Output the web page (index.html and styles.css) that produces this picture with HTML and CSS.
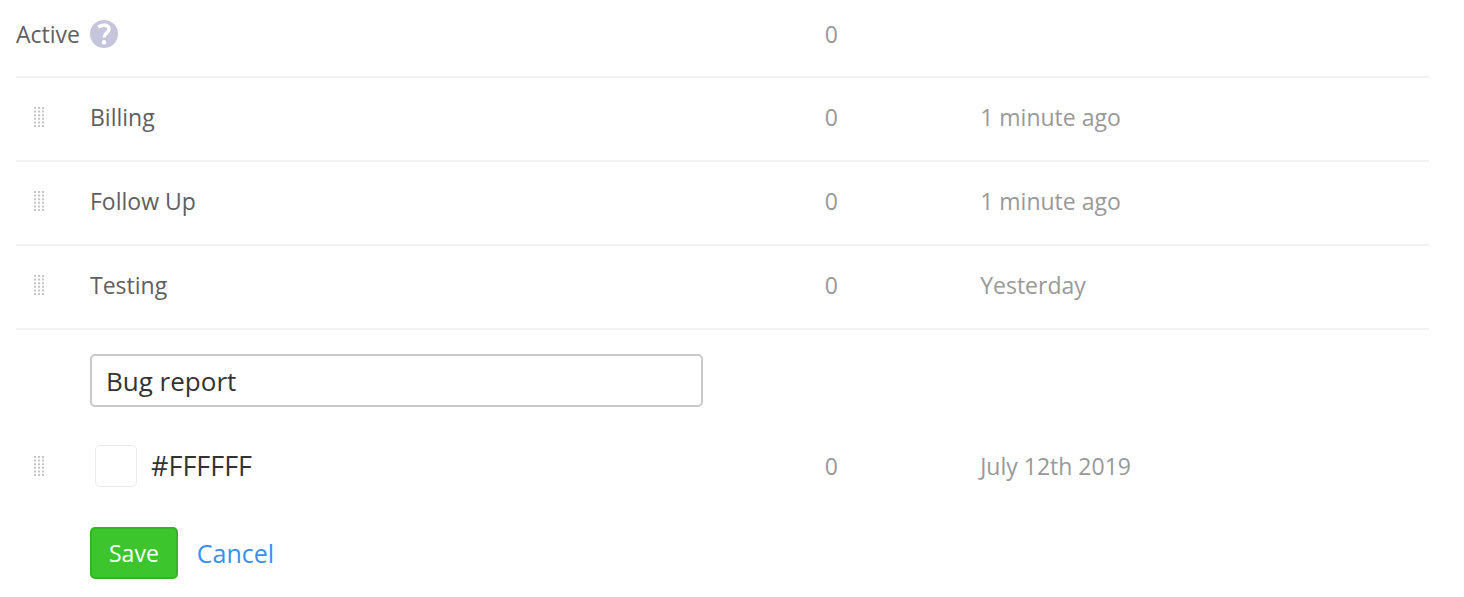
FILE: index.html
```
<!DOCTYPE html>
<html lang="en">
<head>
  <meta charset="UTF-8">
  <meta name="viewport" content="width=device-width, initial-scale=1.0">
  <title>Ticket Statuses</title>
  <link rel="stylesheet" href="styles.css">
</head>
<body>

  <!-- Shared dotted drag grip -->
  <svg width="0" height="0" class="sprite">
    <defs>
      <symbol id="grip" viewBox="0 0 10 20">
        <path d="M1 0V20M5 0V20M9 0V20" fill="none" stroke="#c6c6c6" stroke-width="2" stroke-dasharray="2 1.6"/>
      </symbol>
    </defs>
  </svg>

  <form class="statuses">
    <table class="status-table">
      <colgroup>
        <col class="col-grip">
        <col class="col-name">
        <col class="col-count">
        <col class="col-date">
      </colgroup>
      <tbody>
        <tr class="first">
          <td colspan="2" class="name">
            <div class="active-label">
              Active
              <button type="button" class="help" aria-label="Help">
                <svg width="28" height="28" viewBox="0 0 28 28">
                  <circle cx="14" cy="14" r="14" fill="#c5c6dc"/>
                  <path d="M8.2 7.2C10 5.9 12 5.2 14 5.2C17.2 5.2 19 6.9 19 9.2C19 12.9 14.1 13 14.1 17.6" fill="none" stroke="#fff" stroke-width="3.4"/>
                  <circle cx="14" cy="22.2" r="2.2" fill="#fff"/>
                </svg>
              </button>
            </div>
          </td>
          <td>0</td>
          <td></td>
        </tr>
        <tr>
          <td class="grip"><svg width="10" height="20"><use href="#grip"/></svg></td>
          <td class="name">Billing</td>
          <td>0</td>
          <td>1 minute ago</td>
        </tr>
        <tr>
          <td class="grip"><svg width="10" height="20"><use href="#grip"/></svg></td>
          <td class="name">Follow Up</td>
          <td>0</td>
          <td>1 minute ago</td>
        </tr>
        <tr>
          <td class="grip"><svg width="10" height="20"><use href="#grip"/></svg></td>
          <td class="name">Testing</td>
          <td>0</td>
          <td>Yesterday</td>
        </tr>
        <tr>
          <td class="grip"><svg width="10" height="20"><use href="#grip"/></svg></td>
          <td class="editing">
            <div class="edit-form">
              <input type="text" class="name-input" aria-label="Status name" value="Bug report">
              <div class="color-row">
                <button type="button" class="swatch" id="swatch"></button>
                <label for="swatch">#FFFFFF</label>
              </div>
              <div class="actions">
                <button type="submit" class="save">Save</button>
                <a href="#" class="cancel">Cancel</a>
              </div>
            </div>
          </td>
          <td>0</td>
          <td>July 12th 2019</td>
        </tr>
      </tbody>
    </table>
  </form>

</body>
</html>
```
FILE: styles.css
```
body {
  margin: 0;
  background: #fff;
  font-family: "Open Sans", sans-serif;
  font-size: 23px;
  line-height: 32px;
  color: #999;
}

.sprite {
  display: block;
}

.statuses {
  padding: 0 35px 0 16px;
}

.status-table {
  width: 100%;
  table-layout: fixed;
  border-collapse: collapse;
}

.col-grip {
  width: 74px;
}

.col-name {
  width: 52%;
}

.col-count {
  width: 11%;
}

td {
  padding: 23px 0 27px;
  border-top: 2px solid #f2f2f2;
}

.first td {
  padding: 18px 0 26px;
  border-top: none;
}

.name {
  color: #606060;
}

.active-label {
  display: flex;
  align-items: center;
  gap: 10px;
}

.help {
  padding: 0;
  border: none;
  background: none;
  cursor: pointer;
}

.help svg {
  display: block;
}

.grip {
  padding-left: 18px;
  cursor: move;
}

.grip svg {
  display: block;
}

.editing {
  padding: 24px 122px 26px 0;
}

.edit-form {
  display: flex;
  flex-direction: column;
}

.name-input {
  box-sizing: border-box;
  width: 100%;
  height: 53px;
  padding: 0 14px;
  border: 2px solid #c9c9c9;
  border-radius: 5px;
  font-family: inherit;
  font-size: 26px;
  color: #333;
}

.color-row {
  display: flex;
  align-items: center;
  gap: 14px;
  margin: 38px 0 40px 5px;
  font-size: 27px;
  color: #333;
}

.swatch {
  width: 42px;
  height: 42px;
  border: 1px solid #ececec;
  border-radius: 5px;
  background: #fff;
}

.actions {
  display: flex;
  align-items: center;
  gap: 19px;
  font-size: 25px;
}

.save {
  height: 52px;
  padding: 0 17px;
  border: 2px solid #36b32a;
  border-radius: 5px;
  background: #3dc52e;
  font-family: inherit;
  font-size: 23px;
  color: #fff;
  cursor: pointer;
}

.cancel {
  color: #3a8ff5;
  text-decoration: none;
}
```
